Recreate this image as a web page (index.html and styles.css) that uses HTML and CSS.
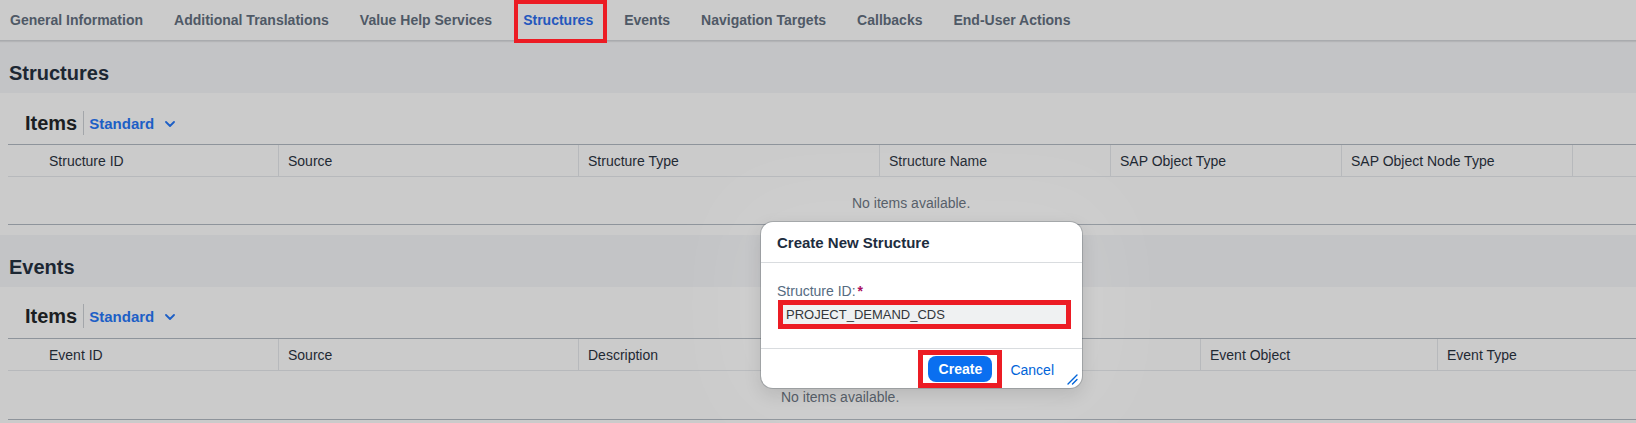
FILE: index.html
```html
<!DOCTYPE html>
<html lang="en">
<head>
<meta charset="utf-8">
<title>Structures</title>
<link rel="stylesheet" href="styles.css">
</head>
<body>
<div class="page">
  <nav class="tabs">
    <span class="tab">General Information</span>
    <span class="tab">Additional Translations</span>
    <span class="tab">Value Help Services</span>
    <span class="tab tab-active">Structures<span class="annot annot-tab"></span></span>
    <span class="tab">Events</span>
    <span class="tab">Navigation Targets</span>
    <span class="tab">Callbacks</span>
    <span class="tab">End-User Actions</span>
  </nav>

  <section class="section">
    <h2 class="section-title">Structures</h2>
    <div class="panel">
      <div class="toolbar">
        <span class="items-title">Items</span>
        <span class="sep"></span>
        <span class="variant">Standard</span>
        <svg class="chev" viewBox="0 0 10 6" width="10" height="6"><path d="M1 1 L5 5 L9 1" fill="none" stroke="#1d5fc6" stroke-width="1.8" stroke-linecap="round" stroke-linejoin="round"/></svg>
      </div>
      <div class="table">
        <div class="thead cols-structures">
          <div class="th th-first">Structure ID</div>
          <div class="th">Source</div>
          <div class="th">Structure Type</div>
          <div class="th">Structure Name</div>
          <div class="th">SAP Object Type</div>
          <div class="th">SAP Object Node Type</div>
          <div class="th"></div>
        </div>
        <div class="empty empty-structures">No items available.</div>
      </div>
    </div>
  </section>

  <section class="section">
    <h2 class="section-title">Events</h2>
    <div class="panel">
      <div class="toolbar toolbar-events">
        <span class="items-title">Items</span>
        <span class="sep"></span>
        <span class="variant">Standard</span>
        <svg class="chev" viewBox="0 0 10 6" width="10" height="6"><path d="M1 1 L5 5 L9 1" fill="none" stroke="#1d5fc6" stroke-width="1.8" stroke-linecap="round" stroke-linejoin="round"/></svg>
      </div>
      <div class="table">
        <div class="thead cols-events">
          <div class="th th-first">Event ID</div>
          <div class="th">Source</div>
          <div class="th">Description</div>
          <div class="th">Event Object</div>
          <div class="th">Event Type</div>
        </div>
        <div class="empty empty-events">No items available.</div>
      </div>
    </div>
  </section>

  <div class="dialog">
    <div class="dialog-header">Create New Structure</div>
    <div class="dialog-content">
      <label class="field-label">Structure ID:<span class="req">*</span></label>
      <div class="annot-box annot-input">
        <div class="input">PROJECT_DEMAND_CDS</div>
      </div>
    </div>
    <div class="dialog-footer">
      <span class="annot-box annot-button"><span class="btn-primary">Create</span></span>
      <span class="btn-link">Cancel</span>
    </div>
    <svg class="resize" viewBox="0 0 12 12" width="12" height="12"><path d="M2 11 L11 2 M6.5 11 L11 6.5" fill="none" stroke="#0064d9" stroke-width="1.4" stroke-linecap="round"/></svg>
  </div>
</div>
</body>
</html>
```
FILE: styles.css
```css
* { box-sizing: border-box; }
html, body { margin: 0; padding: 0; }
body {
  font-family: "Liberation Sans", Arial, sans-serif;
  background: #cbcbcb;
  color: #1f2933;
}
.page {
  position: relative;
  width: 1636px;
  height: 423px;
  overflow: hidden;
  background: #cbcbcb;
}

/* Tabs */
.tabs {
  display: flex;
  align-items: center;
  gap: 31px;
  height: 41px;
  padding-left: 10px;
  background: #cbcbcb;
  border-bottom: 1px solid #a9abae;
  box-shadow: 0 1px 1px rgba(0,0,0,0.08);
  position: relative;
  z-index: 1;
}
.tab {
  position: relative;
  display: flex;
  align-items: center;
  height: 40px;
  font-size: 14px;
  font-weight: 700;
  color: #4f5966;
  white-space: nowrap;
}
.tab-active { color: #2457bd; }

.annot {
  position: absolute;
  border: 4px solid #ec1c24;
}
.annot-tab {
  left: -9px;
  right: -14px;
  top: 0;
  bottom: -3px;
}

/* Sections */
.section-title {
  margin: 0;
  height: 52px;
  padding: 20px 0 0 9px;
  line-height: 24px;
  font-size: 20px;
  font-weight: 700;
  color: #1c2733;
  background: #c3c4c6;
}
.panel {
  background: #cbcbcb;
  padding: 0 0 10px 8px;
  border-radius: 4px 0 0 0;
}
.toolbar {
  display: flex;
  align-items: center;
  height: 51px;
  padding: 9px 0 0 17px;
}
.toolbar-events { padding-top: 7px; }
.items-title {
  font-size: 20px;
  font-weight: 700;
  color: #1b1e22;
}
.sep {
  width: 1px;
  height: 24px;
  background: #a3a6aa;
  margin: 0 5px 0 6px;
}
.variant {
  font-size: 15px;
  font-weight: 700;
  color: #1d5fc6;
}
.chev { margin-left: 11px; margin-top: 1px; }

/* Table */
.thead {
  display: grid;
  height: 33px;
  border-top: 1px solid #8e949b;
  border-bottom: 1px solid #b7b9bc;
}
.cols-structures { grid-template-columns: 270px 300px 301px 231px 231px 231px 1fr; }
.cols-events { grid-template-columns: 270px 300px 622px 237px 1fr; }
.th {
  display: flex;
  align-items: center;
  padding: 1px 0 0 9px;
  border-left: 1px solid #b7b9bc;
  font-size: 14px;
  color: #1f2933;
  white-space: nowrap;
}
.th-first { border-left: none; padding-left: 41px; }
.empty {
  height: 48px;
  padding-top: 16px;
  line-height: 20px;
  font-size: 14px;
  color: #4d5661;
  border-bottom: 1px solid #8e949b;
}
.empty-structures { padding-left: 844px; }
.empty-events { padding-left: 773px; height: 49px; }

/* Dialog */
.dialog {
  position: absolute;
  left: 761px;
  top: 222px;
  width: 321px;
  height: 166px;
  background: #ffffff;
  border-radius: 12px;
  box-shadow: 0 0 0 1px rgba(60,70,80,0.25), 0 6px 18px rgba(0,0,0,0.12), 0 0 90px 30px rgba(255,255,255,0.10);
  display: flex;
  flex-direction: column;
  z-index: 2;
}
.dialog-header {
  height: 41px;
  padding-left: 16px;
  display: flex;
  align-items: center;
  font-size: 15px;
  font-weight: 700;
  color: #1d2d3e;
  border-bottom: 1px solid #d9dcdf;
}
.dialog-content {
  padding: 20px 11px 19px 16px;
  border-bottom: 1px solid #d9dcdf;
  height: 86px;
}
.field-label {
  display: block;
  font-size: 14px;
  line-height: 17px;
  color: #556b81;
}
.req {
  color: #aa0e5f;
  font-weight: 700;
  margin-left: 2px;
}
.annot-box {
  border: 5px solid #ec1c24;
}
.annot-input {
  display: block;
  width: 293px;
  margin-left: 1px;
}
.input {
  height: 19px;
  background: #eff1f2;
  padding-left: 3px;
  font-size: 13px;
  line-height: 20px;
  color: #32363a;
}
.dialog-footer {
  display: flex;
  align-items: flex-start;
  justify-content: flex-end;
  gap: 8px;
  padding: 1px 28px 0 0;
  height: 38px;
}
.annot-button {
  display: inline-flex;
  padding: 1px 5px;
}
.btn-primary {
  display: inline-flex;
  align-items: center;
  justify-content: center;
  width: 64px;
  height: 26px;
  border-radius: 8px;
  background: #0a6ff0;
  color: #ffffff;
  font-size: 14px;
  font-weight: 700;
}
.btn-link {
  align-self: center;
  margin-top: 2px;
  font-size: 14px;
  color: #0064d9;
}
.resize {
  position: absolute;
  right: 4px;
  bottom: 3px;
}
```
